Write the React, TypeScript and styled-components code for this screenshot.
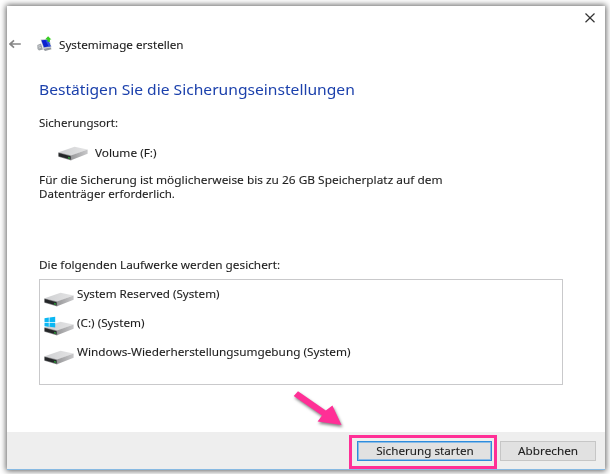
import React from 'react';
import styled, { createGlobalStyle } from 'styled-components';

const GlobalStyle = createGlobalStyle`
  * { box-sizing: border-box; }
  html, body { margin: 0; padding: 0; background: #fff; overflow: hidden; }
  body { font-family: "Noto Sans", "Open Sans", sans-serif; font-size: 11px; color: #1e1e1e; }
`;

const Desktop = styled.div`
  position: relative;
  width: 610px;
  height: 474px;
  padding: 6px 5px 4px 7px;
  background: #fff;
`;

const Window = styled.main`
  display: flex;
  flex-direction: column;
  width: 598px;
  height: 464px;
  background: #fff;
  border-bottom: 1px solid #87b9e2;
  box-shadow: 0 0 6px 1px rgba(0, 0, 0, 0.62);
`;

/* Wide-set lettering: each label is stretched a little from its left edge. */
const Label = styled.span<{ $stretch: number; $center?: boolean }>`
  display: block;
  width: max-content;
  line-height: 14px;
  white-space: nowrap;
  -webkit-text-stroke: 0.1px currentColor;
  transform: scaleX(${(p) => p.$stretch});
  transform-origin: ${(p) => (p.$center ? 'center' : 'left')};
`;

const TopBar = styled.div`
  display: flex;
  justify-content: flex-end;
  height: 30px;
  padding: 7px 10px 0 0;
`;

const CloseButton = styled.button`
  width: 10px;
  height: 10px;
  padding: 0;
  border: 0;
  background: none;
  svg { display: block; }
`;

const TitleRow = styled.header`
  display: flex;
  align-items: flex-start;
  height: 18px;
  padding-left: 2px;
`;

const BackButton = styled.button`
  width: 12px;
  height: 10px;
  margin: 3px 16px 0 0;
  padding: 0;
  border: 0;
  background: none;
  svg { display: block; }
`;

const AppIcon = styled.span`
  width: 15px;
  height: 16px;
  margin-right: 7px;
  svg { display: block; }
`;

const TitleText = styled.div`
  padding-top: 2px;
`;

const Content = styled.section`
  flex: 1;
  padding: 25px 42px 0 32px;
`;

const Heading = styled.h1`
  margin: 0 0 17px;
  height: 20px;
  font-size: 14.5px;
  font-weight: 400;
  color: #1c41ac;
  ${Label} { line-height: 20px; -webkit-text-stroke-width: 0; }
`;

const Location = styled.div`
  display: flex;
  align-items: flex-start;
  height: 14px;
  margin: 16px 0 13px;
  padding-left: 19px;
  gap: 7px;
`;

const Lines = styled.div`
  display: flex;
  flex-direction: column;
  margin-bottom: 57px;
`;

const DriveList = styled.ul`
  width: 524px;
  height: 106px;
  margin: 7px 0 0;
  padding: 7px 4px;
  list-style: none;
  border: 1px solid #c9c9cb;
`;

const DriveItem = styled.li`
  display: flex;
  align-items: flex-start;
  gap: 3px;
  height: 29px;
`;

const IconSlot = styled.span<{ $drop?: number }>`
  display: block;
  margin-top: ${(p) => p.$drop ?? 0}px;
  svg { display: block; }
`;

const Footer = styled.footer`
  display: flex;
  align-items: flex-start;
  justify-content: flex-end;
  gap: 3px;
  height: 37px;
  padding: 3px 9px 0 0;
  background: #eee;
`;

const Highlight = styled.div`
  width: 148px;
  height: 34px;
  padding: 3px 2px 0 5px;
  border: 3px solid #ff2f96;
`;

const Button = styled.button<{ $primary?: boolean }>`
  display: flex;
  align-items: center;
  justify-content: center;
  width: ${(p) => (p.$primary ? 135 : 96)}px;
  height: 20px;
  margin-top: ${(p) => (p.$primary ? 0 : 6)}px;
  padding: 0;
  font: inherit;
  color: #1e1e1e;
  background: #e1e1e1;
  border: ${(p) => (p.$primary ? '1px solid #2e8cdc' : '1px solid #c6c6c6')};
  box-shadow: ${(p) => (p.$primary ? 'inset 0 0 0 1px #8abbe6' : 'none')};
`;

const Pointer = styled.svg`
  position: absolute;
  left: 290px;
  top: 388px;
  filter: drop-shadow(1px 2px 1.5px rgba(0, 0, 0, 0.5));
`;

function Drive({ id, windows }: { id: string; windows?: boolean }) {
  return (
    <svg width="30" height="20" viewBox="0 0 30 20">
      <defs>
        <linearGradient id={`${id}-top`} x1="0" y1="0" x2="1" y2="0">
          <stop offset="0" stopColor="#cfd0d2" />
          <stop offset="1" stopColor="#e4e4e5" />
        </linearGradient>
        <linearGradient id={`${id}-side`} x1="0" y1="0" x2="1" y2="0">
          <stop offset="0" stopColor="#98989a" />
          <stop offset="1" stopColor="#c8c8ca" />
        </linearGradient>
      </defs>
      <path d="M0.6 11.3 L16.6 5.8 L29.5 8.4 L13.2 14.8 Z" fill={`url(#${id}-top)`} />
      <path d="M13 14.6 L29.6 8.4 V12.8 L13 19.3 Z" fill={`url(#${id}-side)`} />
      <path d="M0.4 11.2 L13.2 14.5 V19.4 L0.4 15.7 Z" fill="#858688" />
      <path d="M0.7 12.1 L12.6 15.2 V18.6 L0.7 15.3 Z" fill="#242628" />
      <path d="M10.2 15.8 L11.8 16.2 V17.9 L10.2 17.5 Z" fill="#2fa33b" />
      {windows && (
        <path
          d="M0.5 2.2 L4.8 1.6 V6 H0.5 Z M5.5 1.5 L11.2 0.7 V6 H5.5 Z M0.5 6.7 H4.8 V10.8 L0.5 10.2 Z M5.5 6.7 H11.2 V11.5 L5.5 10.8 Z"
          fill="#0bb7f3"
        />
      )}
    </svg>
  );
}

const drives = [
  { name: 'System Reserved (System)', stretch: 1.058 },
  { name: '(C:) (System)', stretch: 1.066, windows: true },
  { name: 'Windows-Wiederherstellungsumgebung (System)', stretch: 1.07 },
];

export default function App() {
  return (
    <>
      <GlobalStyle />
      <Desktop>
        <Window>
          <TopBar>
            <CloseButton aria-label="Schließen">
              <svg width="10" height="10" viewBox="0 0 10 10" fill="none">
                <path d="M0.5 0.5 L9.5 9.2 M9.5 0.5 L0.5 9.2" stroke="#333" strokeWidth="1.2" />
              </svg>
            </CloseButton>
          </TopBar>
          <TitleRow>
            <BackButton aria-label="Zurück">
              <svg width="12" height="10" viewBox="0 0 12 10" fill="none">
                <path d="M11.8 5 H1 M5 1.4 L1 5 L5 8.6" stroke="#858585" strokeWidth="1.7" />
              </svg>
            </BackButton>
            <AppIcon>
              <svg width="15" height="16" viewBox="0 0 15 16">
                <path d="M0.3 9 L4 7.5 L6 13.5 L2 14.5 L0.5 13 Z" fill="#a0a4a8" />
                <path d="M1.2 10.2 L3.4 9.7 M1.6 12 L4 11.5" stroke="#dfe2e4" strokeWidth="0.8" />
                <path d="M3.6 3.4 L12.3 3 L14.5 11.2 L6.4 12.3 Z" fill="#b5bdc7" />
                <path d="M4.4 4.2 L11 3.8 L13.6 10.2 L6.9 11.3 Z" fill="#0b22cf" />
                <path d="M8.4 4 L11 3.8 L13.6 10.2 L11.6 10.5 Z" fill="#2c50e4" />
                <path d="M6 12.7 L13.8 11.6 L14.5 13.2 L8 15 Z" fill="#92979d" />
                <path d="M11.1 0.2 L14.4 3.4 L12.9 3.6 V6 L10.4 5.4 V3.6 L8.3 3.2 Z" fill="#39cf20" />
              </svg>
            </AppIcon>
            <TitleText><Label $stretch={1.061}>Systemimage erstellen</Label></TitleText>
          </TitleRow>
          <Content>
            <Heading><Label $stretch={1.077}>Bestätigen Sie die Sicherungseinstellungen</Label></Heading>
            <Label $stretch={1.047}>Sicherungsort:</Label>
            <Location>
              <IconSlot $drop={-5}><Drive id="target" /></IconSlot>
              <Label $stretch={1.074}>Volume (F:)</Label>
            </Location>
            <Lines>
              <Label $stretch={1.079}>Für die Sicherung ist möglicherweise bis zu 26 GB Speicherplatz auf dem</Label>
              <Label $stretch={1.048}>Datenträger erforderlich.</Label>
            </Lines>
            <Label $stretch={1.071}>Die folgenden Laufwerke werden gesichert:</Label>
            <DriveList>
              {drives.map((d, i) => (
                <DriveItem key={d.name}>
                  <IconSlot><Drive id={`drive-${i}`} windows={d.windows} /></IconSlot>
                  <Label $stretch={d.stretch}>{d.name}</Label>
                </DriveItem>
              ))}
            </DriveList>
          </Content>
          <Footer>
            <Highlight>
              <Button $primary><Label $center $stretch={1.062}>Sicherung starten</Label></Button>
            </Highlight>
            <Button><Label $center $stretch={1.068}>Abbrechen</Label></Button>
          </Footer>
        </Window>
        <Pointer width="58" height="44" viewBox="0 0 58 44">
          <path d="M8 3.2 L35.8 22.6 L42.4 17.6 L51.5 37 L27.6 33.5 L32 27.4 L3.7 8.1 Z" fill="#ff2f96" />
        </Pointer>
      </Desktop>
    </>
  );
}
